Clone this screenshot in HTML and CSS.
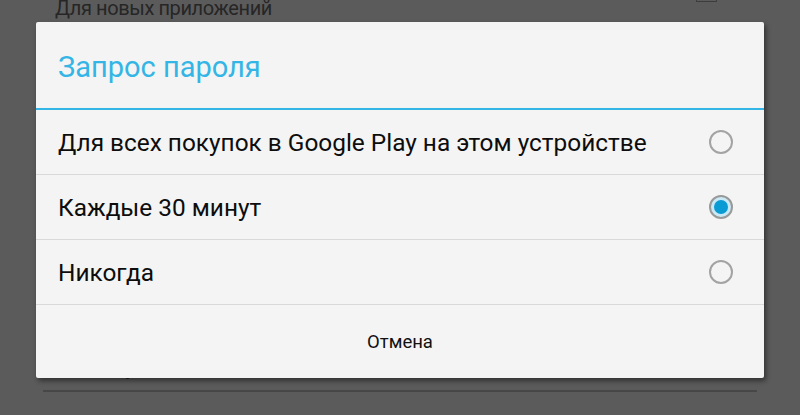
FILE: index.html
```html
<!DOCTYPE html>
<html lang="ru">
<head>
    <meta charset="UTF-8">
    <meta name="viewport" content="width=device-width, initial-scale=1.0">
    <title>Запрос пароля</title>
    <link rel="stylesheet" href="styles.css">
</head>
<body>
    <div class="settings">
        <div class="setting-row top-row">
            <span class="setting-label">Для новых приложений</span>
            <span class="checkbox"></span>
        </div>
        <div class="setting-row bottom-row">
            <span class="setting-label">Оповещения</span>
        </div>
        <div class="setting-line"></div>
    </div>

    <div class="dialog">
        <div class="dialog-title">Запрос пароля</div>
        <ul class="options">
            <li class="option">
                <span>Для всех покупок в Google Play на этом устройстве</span>
                <span class="radio"></span>
            </li>
            <li class="option">
                <span>Каждые 30 минут</span>
                <span class="radio checked"></span>
            </li>
            <li class="option">
                <span>Никогда</span>
                <span class="radio"></span>
            </li>
        </ul>
        <div class="dialog-footer">
            <button class="cancel">Отмена</button>
        </div>
    </div>
</body>
</html>
```

FILE: styles.css
```css
body {
    font-family: 'Roboto', 'Liberation Sans', sans-serif;
    background: #5b5b5b;
    margin: 0;
    padding: 0;
    width: 800px;
    height: 415px;
    overflow: hidden;
    position: relative;
}
.settings {
    padding: 0 43px;
}
.setting-row {
    display: flex;
    align-items: flex-start;
    justify-content: space-between;
    padding: 0 40px 0 12px;
    color: #262626;
    font-size: 20px;
}
.top-row {
    height: 28px;
    margin-top: -6px;
}
.setting-label {
    line-height: 28px;
    letter-spacing: -0.4px;
}
.checkbox {
    width: 19px;
    height: 18px;
    border: 1px solid #3d3d3d;
    margin-top: -12px;
}
.bottom-row {
    margin-top: 337px;
    height: 20px;
}
.bottom-row .setting-label {
    line-height: 20px;
    font-weight: bold;
}
.setting-line {
    height: 2px;
    background: #474747;
    margin-top: 11px;
}
.dialog {
    position: absolute;
    left: 36px;
    top: 22px;
    width: 728px;
    height: 356px;
    background: #f4f4f4;
    border-radius: 2px;
    box-shadow: 2px 3px 5px rgba(0, 0, 0, 0.45);
    display: flex;
    flex-direction: column;
}
.dialog-title {
    border-bottom: 2px solid #33b5e5;
    color: #33b5e5;
    font-size: 29px;
    padding-left: 22px;
    display: flex;
    align-items: center;
    box-sizing: border-box;
    height: 88px;
    padding-top: 4px;
}
.options {
    list-style: none;
    margin: 0;
    padding: 0;
}
.option {
    height: 64px;
    border-bottom: 1px solid #d9d9d9;
    display: flex;
    align-items: center;
    justify-content: space-between;
    padding: 0 31px 0 22px;
    font-size: 24.4px;
    color: #0d0d0d;
}
.radio {
    width: 20px;
    height: 20px;
    border: 2px solid #a3a3a3;
    border-radius: 50%;
    box-sizing: content-box;
    position: relative;
}
.radio.checked {
    border-color: #999;
    background: #c9e9f6;
}
.radio.checked::after {
    content: "";
    position: absolute;
    left: 3px;
    top: 3px;
    width: 14px;
    height: 14px;
    border-radius: 50%;
    background: #0a9bd4;
}
.dialog-footer {
    flex: 1;
    display: flex;
    align-items: center;
    justify-content: center;
}
.cancel {
    font-family: inherit;
    font-size: 18.5px;
    color: #111;
    background: none;
    border: none;
    padding: 0;
}
```
